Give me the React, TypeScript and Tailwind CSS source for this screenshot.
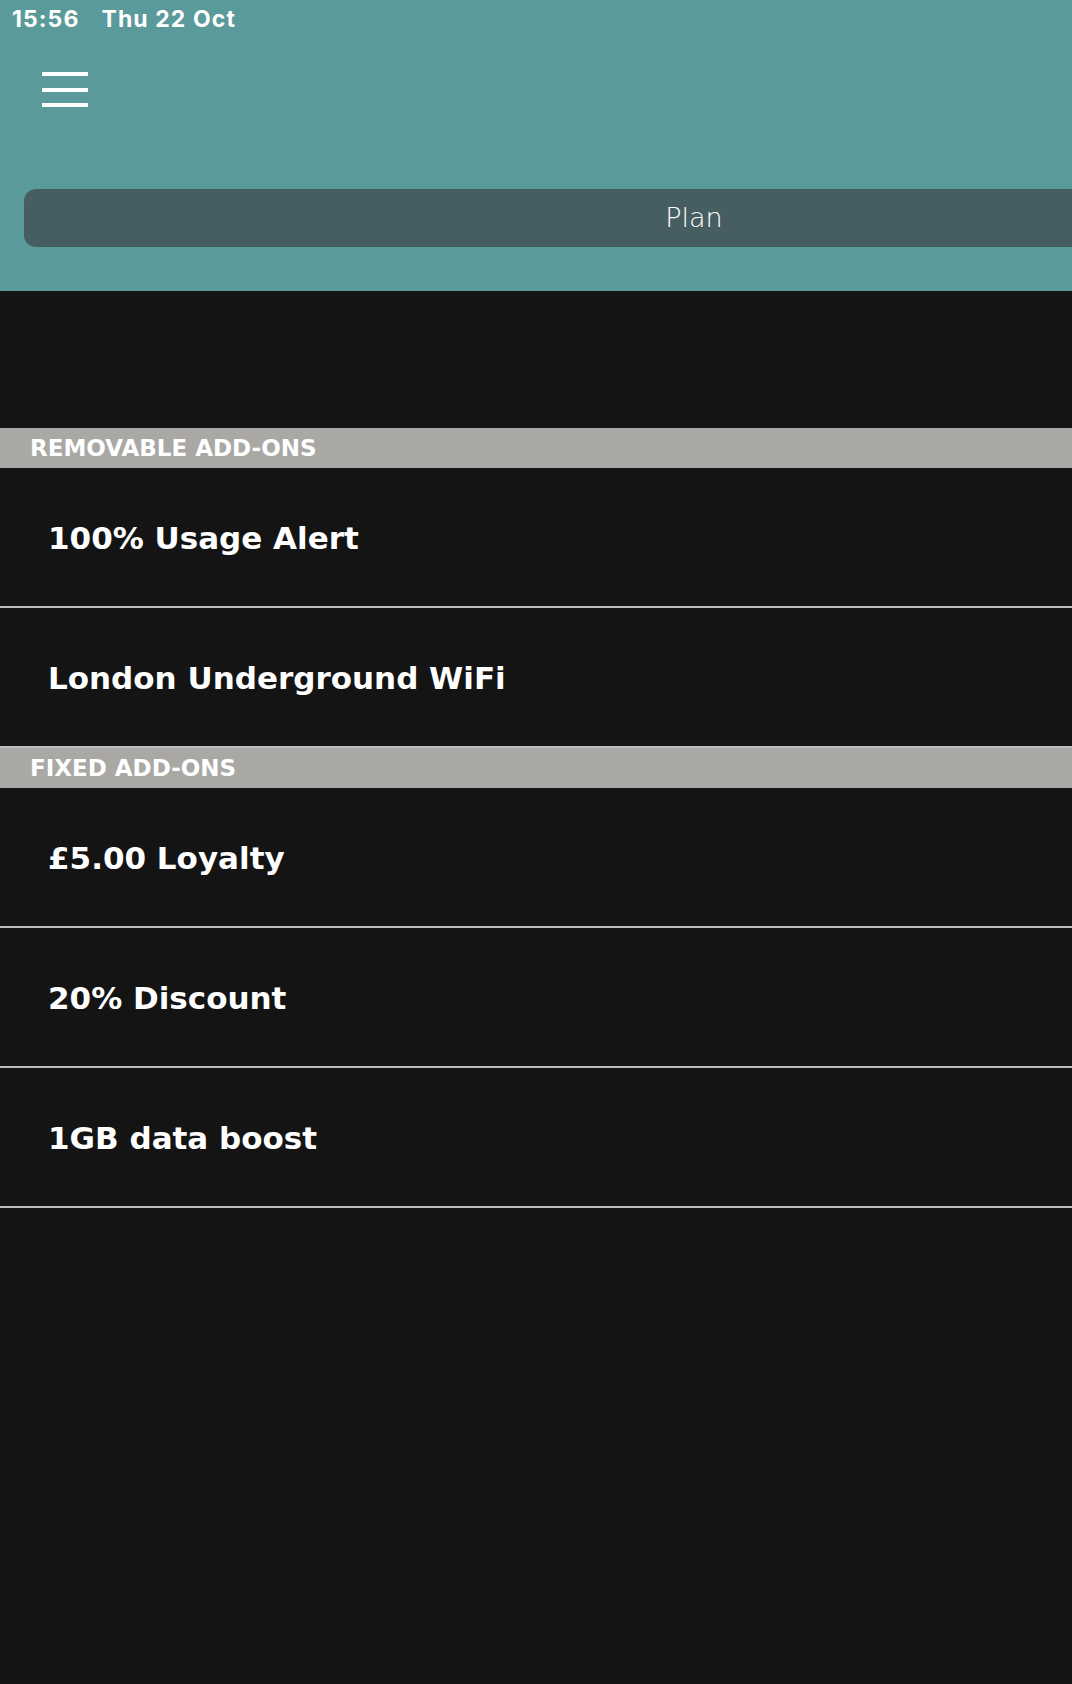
import React from "react";

const removable = ["100% Usage Alert", "London Underground WiFi"];
const fixed = ["£5.00 Loyalty", "20% Discount", "1GB data boost"];

function SectionHeader({ title }: { title: string }) {
  return (
    <div className="h-[40px] bg-[#a9a8a5] pl-[30px] flex items-center">
      <span className="text-white font-bold text-[23px] leading-none font-['DejaVu_Sans',sans-serif]">
        {title}
      </span>
    </div>
  );
}

function Row({ label }: { label: string }) {
  return (
    <div className="h-[140px] flex items-center pl-[48px] pt-[3px] border-b-2 border-[#bdbdbd]">
      <span className="text-white font-bold text-[31px] leading-none font-['DejaVu_Sans',sans-serif]">
        {label}
      </span>
    </div>
  );
}

export default function App() {
  return (
    <div className="w-[1072px] h-[1684px] bg-[#141414] overflow-hidden">
      <div className="h-[291px] bg-[#5b9a9a] flex flex-col">
        <div className="h-[38px] flex items-center gap-[22px] pl-[12px] text-white font-bold text-[23px] tracking-[1.1px] font-['Inter',sans-serif]">
          <span>15:56</span>
          <span>Thu 22 Oct</span>
        </div>
        <div className="pl-[42px] pt-[34px] flex flex-col gap-[11.5px]">
          <div className="w-[46px] h-[4px] bg-white" />
          <div className="w-[46px] h-[4px] bg-white" />
          <div className="w-[46px] h-[4px] bg-white" />
        </div>
        <div className="mt-[82px] ml-[24px] w-[1340px] h-[58px] shrink-0 rounded-[12px] bg-[#465e62] flex items-center justify-center">
          <span className="text-white text-[27px] font-light font-['DejaVu_Sans',sans-serif]">Plan</span>
        </div>
      </div>
      <div className="h-[137px]" />
      <SectionHeader title="REMOVABLE ADD-ONS" />
      {removable.map((r) => (
        <Row key={r} label={r} />
      ))}
      <SectionHeader title="FIXED ADD-ONS" />
      {fixed.map((r) => (
        <Row key={r} label={r} />
      ))}
    </div>
  );
}
